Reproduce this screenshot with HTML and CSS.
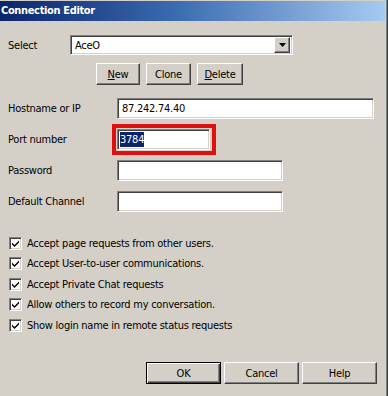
FILE: index.html
```html
<!DOCTYPE html>
<html lang="en">
<head>
    <meta charset="UTF-8">
    <link rel="stylesheet" href="styles.css">
    <title>Connection Editor</title>
</head>
<body>
    <div class="window">
        <div class="frame">
            <div class="titlebar">Connection Editor</div>

            <div class="select-row">
                <span class="label">Select</span>
                <div class="combo sunken">
                    <span class="combo-text">AceO</span>
                    <span class="drop raised">
                        <svg width="7" height="4" viewBox="0 0 7 4"><path d="M0 0H7L3.5 4Z" fill="#000"/></svg>
                    </span>
                </div>
            </div>

            <div class="edit-buttons">
                <button class="btn raised small-new"><u>N</u>ew</button>
                <button class="btn raised small-clone">Clone</button>
                <button class="btn raised small-delete"><u>D</u>elete</button>
            </div>

            <div class="fields">
                <div class="field">
                    <span class="label">Hostname or IP</span>
                    <div class="input sunken wide">87.242.74.40</div>
                </div>
                <div class="field">
                    <span class="label">Port number</span>
                    <div class="marked">
                        <div class="input sunken short"><span class="selected">3784</span></div>
                        <span class="red-box"></span>
                    </div>
                </div>
                <div class="field">
                    <span class="label">Password</span>
                    <div class="input sunken mid"></div>
                </div>
                <div class="field">
                    <span class="label">Default Channel</span>
                    <div class="input sunken mid"></div>
                </div>
            </div>

            <div class="checks">
                <div class="check"><span class="box"><svg width="7" height="7" viewBox="0 0 7 7"><path d="M0 2.5L2.5 5L7 0.5V2.5L2.5 7L0 4.5Z" fill="#000"/></svg></span>Accept page requests from other users.</div>
                <div class="check"><span class="box"><svg width="7" height="7" viewBox="0 0 7 7"><path d="M0 2.5L2.5 5L7 0.5V2.5L2.5 7L0 4.5Z" fill="#000"/></svg></span>Accept User-to-user communications.</div>
                <div class="check"><span class="box"><svg width="7" height="7" viewBox="0 0 7 7"><path d="M0 2.5L2.5 5L7 0.5V2.5L2.5 7L0 4.5Z" fill="#000"/></svg></span>Accept Private Chat requests</div>
                <div class="check"><span class="box"><svg width="7" height="7" viewBox="0 0 7 7"><path d="M0 2.5L2.5 5L7 0.5V2.5L2.5 7L0 4.5Z" fill="#000"/></svg></span>Allow others to record my conversation.</div>
                <div class="check"><span class="box"><svg width="7" height="7" viewBox="0 0 7 7"><path d="M0 2.5L2.5 5L7 0.5V2.5L2.5 7L0 4.5Z" fill="#000"/></svg></span>Show login name in remote status requests</div>
            </div>

            <div class="footer">
                <button class="btn default">OK</button>
                <button class="btn raised">Cancel</button>
                <button class="btn raised">Help</button>
            </div>
        </div>
    </div>
</body>
</html>
```

FILE: styles.css
```css
body {
    margin: 0;
    padding: 0;
    background-color: #d4d0c8;
    font-family: 'DejaVu Sans Condensed', 'DejaVu Sans', sans-serif;
    font-stretch: condensed;
    font-size: 11px;
    letter-spacing: -0.25px;
    color: #000;
}

.window {
    width: 387px;
    height: 396px;
    border-right: 1px solid #404040;
    background-color: #d4d0c8;
}

.frame {
    height: 396px;
    border-right: 1px solid #808080;
    display: flex;
    flex-direction: column;
}

.titlebar {
    height: 21px;
    margin-right: 1px;
    padding-left: 1px;
    box-sizing: border-box;
    border-top: 1px solid #d4d0c8;
    background: linear-gradient(to right, #0a246a 0%, #3a6ab0 45%, #a6caf0 100%);
    color: #fff;
    font-weight: bold;
    font-size: 11px;
    letter-spacing: -0.35px;
    line-height: 19px;
}

/* 3d borders */
.sunken {
    border: 1px solid;
    border-color: #808080 #fff #fff #808080;
    box-shadow: inset 1px 1px #404040, inset -1px -1px #d4d0c8;
    background-color: #fff;
    box-sizing: border-box;
}

.raised {
    border: 1px solid;
    border-color: #fff #404040 #404040 #fff;
    box-shadow: inset -1px -1px #808080;
    background-color: #d4d0c8;
    box-sizing: border-box;
}

.label {
    width: 109px;
    flex-shrink: 0;
}

.select-row {
    display: flex;
    align-items: center;
    margin-top: 14px;
    padding-left: 8px;
    height: 20px;
}

.select-row .label {
    width: 62px;
}

.combo {
    width: 223px;
    height: 20px;
    display: flex;
    align-items: center;
    justify-content: space-between;
    padding: 2px;
}

.combo-text {
    padding-left: 2px;
}

.drop {
    width: 16px;
    height: 16px;
    display: flex;
    align-items: center;
    justify-content: center;
}

.edit-buttons {
    display: flex;
    gap: 6px;
    margin-top: 8px;
    padding-left: 96px;
}

.btn {
    font-family: 'DejaVu Sans Condensed', 'DejaVu Sans', sans-serif;
    font-stretch: condensed;
    font-size: 11px;
    letter-spacing: -0.25px;
    height: 22px;
    padding: 0;
    color: #000;
}

.small-new { width: 44px; }
.small-clone { width: 45px; }
.small-delete { width: 46px; }

.fields {
    display: flex;
    flex-direction: column;
    gap: 10px;
    margin-top: 13px;
    padding-left: 8px;
}

.field {
    display: flex;
    align-items: center;
    height: 21px;
}

.input {
    height: 21px;
    padding: 0 4px;
    line-height: 19px;
}

.wide { width: 257px; }
.mid { width: 166px; }
.short { width: 93px; padding-left: 2px; }

.marked {
    position: relative;
}

.selected {
    background-color: #0a246a;
    color: #fff;
    padding: 1px 0;
}

.red-box {
    position: absolute;
    left: -5px;
    top: -5px;
    width: 104px;
    height: 31px;
    box-sizing: border-box;
    border: 4px solid #e01010;
}

.checks {
    margin-top: 21px;
    padding-left: 9px;
    display: flex;
    flex-direction: column;
}

.check {
    display: flex;
    align-items: center;
    height: 20.5px;
}

.box {
    width: 13px;
    height: 13px;
    box-sizing: border-box;
    border: 1px solid;
    border-color: #808080 #fff #fff #808080;
    box-shadow: inset 1px 1px #404040, inset -1px -1px #d4d0c8;
    background-color: #fff;
    display: flex;
    align-items: center;
    justify-content: center;
    margin-right: 5px;
}

.footer {
    margin-top: auto;
    display: flex;
    justify-content: flex-end;
    gap: 3px;
    padding-right: 9px;
    padding-bottom: 12px;
}

.footer .btn {
    width: 75px;
}

.default {
    border: 1px solid #000;
    box-shadow: inset 1px 1px #fff, inset -1px -1px #404040, inset -2px -2px #808080;
    background-color: #d4d0c8;
    box-sizing: border-box;
}
```
